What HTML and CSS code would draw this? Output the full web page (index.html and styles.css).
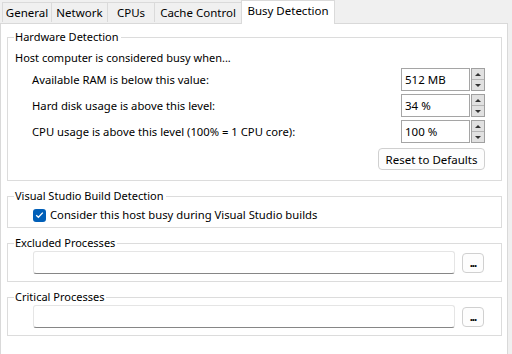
FILE: index.html
```html
<!DOCTYPE html>
<html lang="en">

<head>
    <meta charset="UTF-8">
    <meta name="viewport" content="width=device-width, initial-scale=1.0">
    <title>Busy Detection</title>
    <link rel="stylesheet" href="styles.css">
</head>

<body>
    <div class="tabs">
        <div class="tab tab-general">General</div>
        <div class="tab tab-network">Network</div>
        <div class="tab tab-cpus">CPUs</div>
        <div class="tab tab-cache">Cache Control</div>
        <div class="tab tab-busy active">Busy Detection</div>
    </div>
    <div class="page">
        <fieldset class="group">
            <legend>Hardware Detection</legend>
            <div class="group-body hw-body">
                <div class="intro">Host computer is considered busy when...</div>
                <div class="rows">
                    <div class="row">
                        <span class="label">Available RAM is below this value:</span>
                        <div class="spin">
                            <div class="spin-value">512 MB</div>
                            <div class="spin-btns">
                                <span class="up"></span>
                                <span class="down"></span>
                            </div>
                        </div>
                    </div>
                    <div class="row">
                        <span class="label">Hard disk usage is above this level:</span>
                        <div class="spin">
                            <div class="spin-value">34 %</div>
                            <div class="spin-btns">
                                <span class="up"></span>
                                <span class="down"></span>
                            </div>
                        </div>
                    </div>
                    <div class="row">
                        <span class="label">CPU usage is above this level (100% = 1 CPU core):</span>
                        <div class="spin">
                            <div class="spin-value">100 %</div>
                            <div class="spin-btns">
                                <span class="up"></span>
                                <span class="down"></span>
                            </div>
                        </div>
                    </div>
                </div>
                <div class="actions">
                    <button class="btn btn-reset">Reset to Defaults</button>
                </div>
            </div>
        </fieldset>

        <fieldset class="group">
            <legend>Visual Studio Build Detection</legend>
            <div class="group-body vs-body">
                <label class="check">
                    <span class="box">
                        <svg width="9" height="8" viewBox="0 0 9 8">
                            <path d="M1.2 4.2 L3.4 6.3 L7.8 1.6" fill="none" stroke="#fff" stroke-width="1.3" />
                        </svg>
                    </span>
                    Consider this host busy during Visual Studio builds
                </label>
            </div>
        </fieldset>

        <fieldset class="group">
            <legend>Excluded Processes</legend>
            <div class="group-body list-body">
                <div class="textbox"></div>
                <button class="btn btn-dots">...</button>
            </div>
        </fieldset>

        <fieldset class="group">
            <legend>Critical Processes</legend>
            <div class="group-body list-body">
                <div class="textbox"></div>
                <button class="btn btn-dots">...</button>
            </div>
        </fieldset>
    </div>
</body>

</html>
```

FILE: styles.css
```css
* {
    box-sizing: border-box;
}

body {
    margin: 0;
    background: #f0f0f0;
    font-family: "Noto Sans", "Open Sans", sans-serif;
    font-size: 11px;
    line-height: 16px;
    color: #000;
    height: 354px;
    overflow: hidden;
}

.tabs {
    display: flex;
    align-items: flex-end;
    height: 23px;
    padding-left: 2px;
}

.tab {
    height: 20px;
    margin-bottom: 1px;
    border: 1px solid #dadada;
    border-bottom: none;
    margin-right: -1px;
    display: flex;
    align-items: center;
    justify-content: center;
    background: #f0f0f0;
    font-size: 11.5px;
}

.tab-general {
    width: 50px;
}

.tab-network {
    width: 57px;
}

.tab-cpus {
    width: 48px;
}

.tab-cache {
    width: 88px;
}

.tab-busy {
    width: 94px;
}

.tab.active {
    height: 24px;
    margin-bottom: -1px;
    background: #fff;
    position: relative;
    z-index: 1;
    padding-bottom: 4px;
}

.page {
    width: 508px;
    height: 340px;
    background: #fff;
    border: 1px solid #d9d9d9;
    padding: 5px 0 0 6px;
}

.group {
    width: 495px;
    margin: 0;
    padding: 0;
    border: 1px solid #dcdcdc;
    min-width: 0;
}

.group+.group {
    margin-top: 7px;
}

.group legend {
    margin-left: 6px;
    padding: 0 2px 0 1px;
    line-height: 16px;
}

.hw-body {
    padding: 5px 16px 10px 7px;
}

.intro {
    height: 16px;
}

.rows {
    display: flex;
    flex-direction: column;
    gap: 3px;
    margin-top: 2px;
}

.row {
    display: flex;
    align-items: center;
    justify-content: space-between;
    padding-left: 17px;
    font-size: 11.25px;
}

.spin {
    display: flex;
    height: 23px;
}

.spin-value {
    width: 69px;
    border: 1px solid #a5a5a5;
    padding: 3px 0 0 3px;
    font-size: 11.5px;
}

.spin-btns {
    width: 14px;
    margin-left: 1px;
    display: flex;
    flex-direction: column;
    border: 1px solid #a0a0a0;
    background: #e1e1e1;
}

.spin-btns span {
    flex: 1;
    display: flex;
    align-items: center;
    justify-content: center;
}

.spin-btns .up {
    border-bottom: 1px solid #b5b5b5;
}

.spin-btns .up::after,
.spin-btns .down::after {
    content: '';
    border-left: 3px solid transparent;
    border-right: 3px solid transparent;
}

.spin-btns .up::after {
    border-bottom: 3px solid #333;
}

.spin-btns .down::after {
    border-top: 3px solid #333;
}

.actions {
    display: flex;
    justify-content: flex-end;
    margin-top: 5px;
}

.btn {
    font-family: inherit;
    font-size: 11.5px;
    color: #000;
    background: #fdfdfd;
    border: 1px solid #d0d0d0;
    border-radius: 4px;
    padding: 0;
    height: 22px;
}

.btn-reset {
    width: 107px;
}

.vs-body {
    padding: 3px 0 4px 25px;
}

.check {
    display: flex;
    align-items: center;
    gap: 4px;
    font-size: 11.25px;
}

.box {
    width: 13px;
    height: 13px;
    border-radius: 3px;
    background: #005fb8;
    display: flex;
    align-items: center;
    justify-content: center;
}

.list-body {
    display: flex;
    align-items: center;
    gap: 7px;
    padding: 0 17px 7px 25px;
}

.textbox {
    flex: 1;
    height: 23px;
    border: 1px solid #e5e5e5;
    border-bottom: 1px solid #868686;
    border-radius: 3px;
}

.btn-dots {
    width: 22px;
    height: 20px;
    font-weight: bold;
    line-height: 14px;
    letter-spacing: -1px;
}
```
